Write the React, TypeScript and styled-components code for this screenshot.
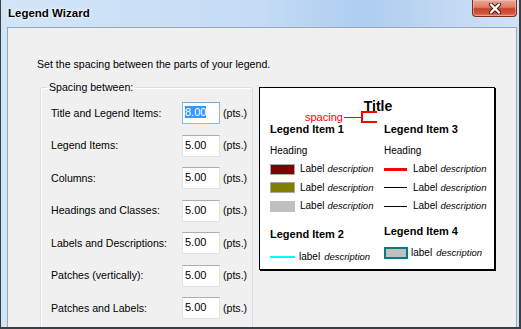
import React from 'react';
import styled, { createGlobalStyle } from 'styled-components';

const GlobalStyle = createGlobalStyle`
	html, body {
		margin: 0;
		padding: 0;
		overflow: hidden;
		background: #3a3f46;
	}
	body {
		font-family: 'Liberation Sans', Arial, sans-serif;
	}
`;

const rows = [
	{ label: 'Title and Legend Items:', value: '8.00', focused: true },
	{ label: 'Legend Items:', value: '5.00' },
	{ label: 'Columns:', value: '5.00' },
	{ label: 'Headings and Classes:', value: '5.00' },
	{ label: 'Labels and Descriptions:', value: '5.00' },
	{ label: 'Patches (vertically):', value: '5.00' },
	{ label: 'Patches and Labels:', value: '5.00' },
];

const CloseGlyph = () => (
	<svg width='16' height='11' viewBox='0 0 16 11'>
		<path d='M4 1.5 L12 9.5 M12 1.5 L4 9.5' stroke='#4a1a12' strokeWidth='4.2' strokeLinecap='round' />
		<path d='M4 1.5 L12 9.5 M12 1.5 L4 9.5' stroke='#ffffff' strokeWidth='2.4' strokeLinecap='round' />
	</svg>
);

const LegendRow: React.FC<{ symbol: React.ReactNode; label: string; gap?: number; descGap?: number }> = ({
	symbol,
	label,
	gap = 5,
	descGap = 3,
}) => (
	<SymbolRow>
		{symbol}
		<SymbolLabel style={{ marginLeft: gap }}>{label}</SymbolLabel>
		<Description style={{ marginLeft: descGap }}>description</Description>
	</SymbolRow>
);

const App: React.FunctionComponent = () => {
	return (
		<>
			<GlobalStyle />
			<Window>
				<TitleBar>
					<WindowTitle>Legend Wizard</WindowTitle>
					<CloseButton>
						<CloseGlyph />
					</CloseButton>
				</TitleBar>
				<Client>
					<Instruction>Set the spacing between the parts of your legend.</Instruction>
					<ContentRow>
						<GroupBox>
							<GroupCaption>Spacing between:</GroupCaption>
							<FieldGrid>
								{rows.map((row) => (
									<React.Fragment key={row.label}>
										<FieldLabel>{row.label}</FieldLabel>
										<TextBox $focused={row.focused}>
											{row.focused ? <Selected>{row.value}</Selected> : row.value}
										</TextBox>
										<Unit>(pts.)</Unit>
									</React.Fragment>
								))}
							</FieldGrid>
						</GroupBox>
						<Preview>
							<PreviewTitle>Title</PreviewTitle>
							<Annotation>
								<AnnotationText>spacing</AnnotationText>
								<Leader />
								<Bracket />
							</Annotation>
							<Columns>
								<Column>
									<ItemTitle>Legend Item 1</ItemTitle>
									<Heading>Heading</Heading>
									<SymbolList>
										<LegendRow symbol={<Patch $fill='#800000' $edge='#a8a8a8' />} label='Label' />
										<LegendRow symbol={<Patch $fill='#808000' $edge='#a8a8a8' />} label='Label' />
										<LegendRow symbol={<Patch $fill='#c0c0c0' $edge='#c0c0c0' />} label='Label' />
									</SymbolList>
									<ItemTitle $mt={16}>Legend Item 2</ItemTitle>
									<SymbolList $mt={10.5}>
										<LegendRow symbol={<Line $color='#00ffff' $weight={2} />} label='label' gap={4} descGap={4} />
									</SymbolList>
								</Column>
								<Column>
									<ItemTitle>Legend Item 3</ItemTitle>
									<Heading>Heading</Heading>
									<SymbolList>
										<LegendRow symbol={<Line $color='#ff0000' $weight={3} $width={23} />} label='Label' gap={6} />
										<LegendRow symbol={<Line $color='#000000' $weight={1} $width={23} />} label='Label' gap={6} />
										<LegendRow symbol={<Line $color='#000000' $weight={1} $width={23} />} label='Label' gap={6} />
									</SymbolList>
									<ItemTitle $mt={13}>Legend Item 4</ItemTitle>
									<SymbolList $mt={9.5}>
										<LegendRow
											symbol={<Patch $fill='#c0c0c0' $edge='#008080' $thick $width={24} $height={12} />}
											label='label'
											gap={3}
											descGap={4}
										/>
									</SymbolList>
								</Column>
							</Columns>
						</Preview>
					</ContentRow>
				</Client>
			</Window>
		</>
	);
};

const Window = styled.div`
	width: 521px;
	height: 329px;
	box-sizing: border-box;
	display: flex;
	flex-direction: column;
	background: linear-gradient(90deg, #d2e5f8 0%, #c4dcf5 50%, #aecdf0 70%, #c3daf3 88%, #d0e3f6 100%);
	border-left: 1px solid #3a3f46;
	border-right: 2px solid #3a3f46;
	border-bottom: 2px solid #3a3f46;
	overflow: hidden;
`;

const TitleBar = styled.div`
	height: 27px;
	flex: none;
	display: flex;
	justify-content: space-between;
	align-items: flex-start;
	padding-left: 7px;
`;

const WindowTitle = styled.div`
	margin-top: 6px;
	font-size: 11.5px;
	line-height: 14px;
	font-weight: 700;
	color: #000;
	text-shadow: 0 0 5px rgba(255, 255, 255, 0.95), 0 0 2px rgba(255, 255, 255, 0.9);
`;

const CloseButton = styled.div`
	width: 45px;
	height: 17px;
	margin-right: 2px;
	box-sizing: border-box;
	display: flex;
	justify-content: center;
	align-items: center;
	border: 1px solid #7e2d20;
	border-top: none;
	border-radius: 0 0 4px 4px;
	background: linear-gradient(180deg, #e9a899 0%, #dc7d68 45%, #c7412a 55%, #d2583f 85%, #e0826c 100%);
	box-shadow: inset 0 0 0 1px rgba(255, 210, 200, 0.45);
`;

const Client = styled.div`
	flex: 1;
	margin: 0 2px 0 6px;
	border: 1px solid #97a6b9;
	border-bottom: none;
	background: #f0f0f0;
	padding: 30px 0 0 29px;
	overflow: hidden;
	font-size: 10.6px;
	line-height: 13px;
	color: #000;
`;

const Instruction = styled.div`
	height: 13px;
`;

const ContentRow = styled.div`
	display: flex;
	align-items: flex-start;
	margin: 10px 0 0 3px;
`;

const GroupBox = styled.fieldset`
	width: 213px;
	height: 260px;
	box-sizing: border-box;
	margin: 0;
	padding: 0;
	border: 1px solid #d5dfe5;
	border-radius: 3px;
	box-shadow: inset 1px 1px 0 #fff;
`;

const GroupCaption = styled.legend`
	margin-left: 6px;
	padding: 0 2px;
	line-height: 13px;
`;

const FieldGrid = styled.div`
	display: grid;
	grid-template-columns: 131px 38px auto;
	grid-auto-rows: 32.5px;
	align-items: center;
	padding: 3px 0 0 10px;
`;

const FieldLabel = styled.div`
	white-space: nowrap;
`;

const TextBox = styled.div<{ $focused?: boolean }>`
	height: 22px;
	box-sizing: border-box;
	padding: 3px 0 0 2px;
	background: #fff;
	border: 1px solid ${(p) => (p.$focused ? '#8fb8de' : '#e2e3ea')};
	border-top-color: ${(p) => (p.$focused ? '#7aa7d6' : '#abadb3')};
	line-height: 13px;
	font-size: 11px;
`;

const Selected = styled.span`
	background: #3399ff;
	color: #fff;
`;

const Unit = styled.div`
	margin-left: 3px;
`;

const Preview = styled.div`
	width: 236px;
	height: 183px;
	box-sizing: border-box;
	margin: 6px 0 0 6px;
	border: 1px solid #000;
	box-shadow: 1px 1px 0 #000;
	background: #fff;
	padding-top: 11px;
	display: flex;
	flex-direction: column;
`;

const PreviewTitle = styled.div`
	text-align: center;
	font-size: 14px;
	line-height: 14px;
	font-weight: 700;
	padding-left: 2px;
`;

const Annotation = styled.div`
	display: flex;
	align-items: center;
	height: 12px;
	margin: -2px 0 0 45px;
`;

const AnnotationText = styled.span`
	color: #ff0000;
	font-size: 11px;
	line-height: 10px;
`;

const Leader = styled.div`
	width: 17px;
	height: 1px;
	margin: 1px 0 0 1px;
	background: #ff0000;
`;

const Bracket = styled.div`
	width: 16px;
	height: 12px;
	box-sizing: border-box;
	border: 2px solid #ff0000;
	border-right: none;
`;

const Columns = styled.div`
	display: grid;
	grid-template-columns: 114px 1fr;
	padding-left: 10px;
`;

const Column = styled.div`
	display: flex;
	flex-direction: column;
	align-items: flex-start;
`;

const ItemTitle = styled.div<{ $mt?: number }>`
	margin-top: ${(p) => p.$mt ?? 0}px;
	font-size: 11px;
	line-height: 12px;
	font-weight: 700;
	white-space: nowrap;
`;

const Heading = styled.div`
	margin-top: 9.5px;
	font-size: 10px;
	line-height: 12px;
`;

const SymbolList = styled.div<{ $mt?: number }>`
	display: flex;
	flex-direction: column;
	gap: 6.6px;
	margin-top: ${(p) => p.$mt ?? 6.5}px;
`;

const SymbolRow = styled.div`
	display: flex;
	align-items: center;
	height: 12px;
	white-space: nowrap;
`;

const Patch = styled.div<{ $fill: string; $edge: string; $thick?: boolean; $width?: number; $height?: number }>`
	width: ${(p) => p.$width ?? 25}px;
	height: ${(p) => p.$height ?? 11}px;
	box-sizing: border-box;
	background: ${(p) => p.$fill};
	border: ${(p) => (p.$thick ? 2 : 1)}px solid ${(p) => p.$edge};
`;

const Line = styled.div<{ $color: string; $weight: number; $width?: number }>`
	width: ${(p) => p.$width ?? 25}px;
	height: ${(p) => p.$weight}px;
	background: ${(p) => p.$color};
`;

const SymbolLabel = styled.span`
	font-size: 10px;
	line-height: 12px;
`;

const Description = styled.span`
	font-size: 9.5px;
	line-height: 12px;
	font-style: italic;
`;

export default App;
